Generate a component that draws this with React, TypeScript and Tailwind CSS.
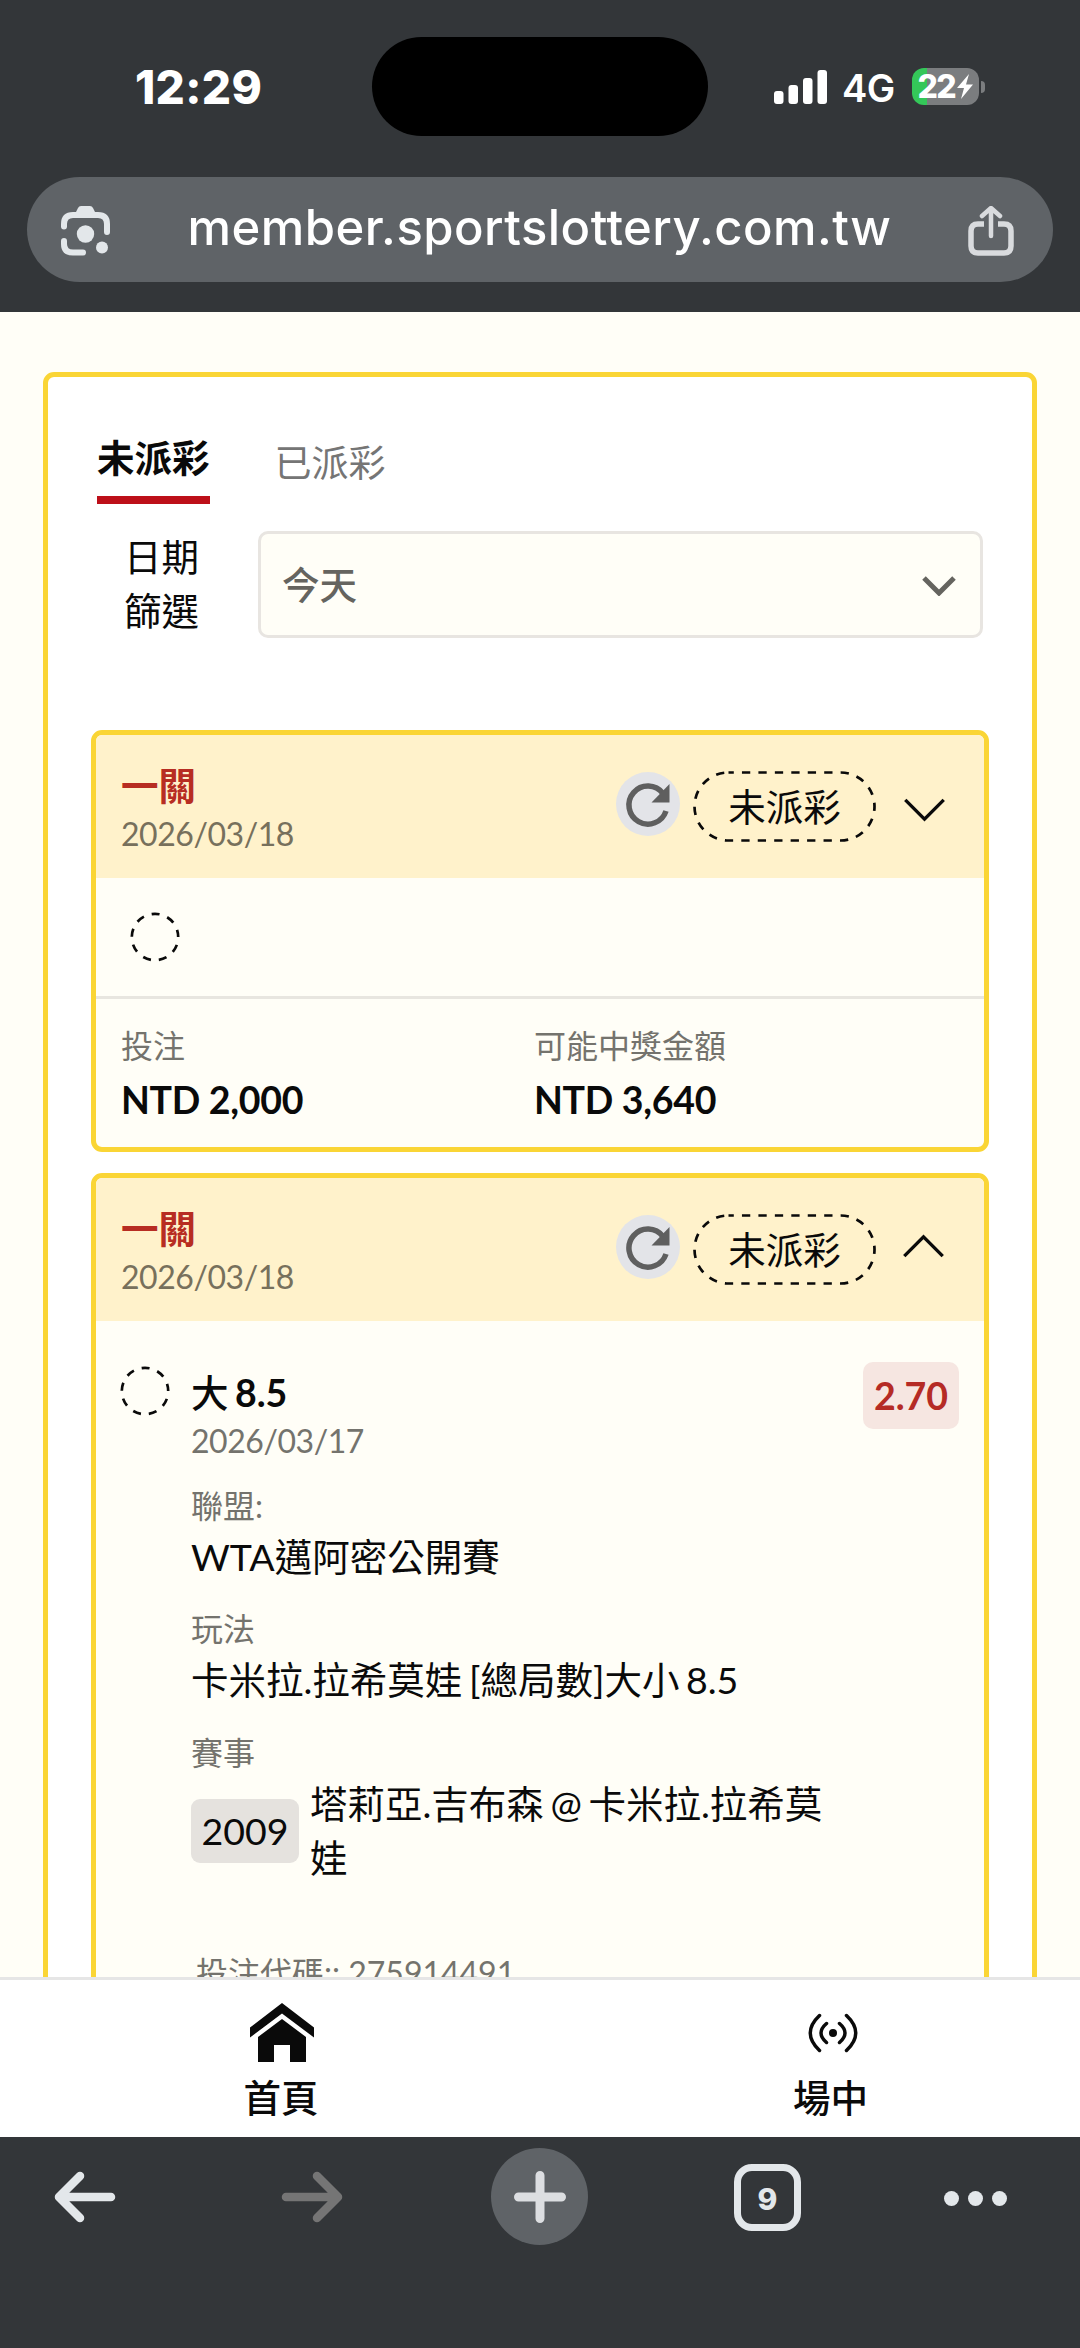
import type { ReactNode } from 'react';
import { clsx } from 'clsx';

interface BetLeg {
  pick: string;
  line: string;
  date: string;
  odds: string;
  league: string;
  play: string;
  matchNo: string;
  match: string;
  code: string;
}

interface Ticket {
  id: number;
  title: string;
  date: string;
  stake: string;
  payout: string;
  leg?: BetLeg;
}

const TICKETS: Ticket[] = [
  { id: 1, title: '一關', date: '2026/03/18', stake: 'NTD 2,000', payout: 'NTD 3,640' },
  {
    id: 2,
    title: '一關',
    date: '2026/03/18',
    stake: '',
    payout: '',
    leg: {
      pick: '大',
      line: '8.5',
      date: '2026/03/17',
      odds: '2.70',
      league: 'WTA邁阿密公開賽',
      play: '卡米拉.拉希莫娃 [總局數]大小 8.5',
      matchNo: '2009',
      match: '塔莉亞.吉布森 @ 卡米拉.拉希莫娃',
      code: '275914491',
    },
  },
];

export default function App() {
  return (
    <div className="flex h-[2348px] w-[1080px] flex-col overflow-hidden bg-[#fffef7] font-['Lato','Noto_Sans_CJK_TC',sans-serif] text-[37.5px] leading-[54px] text-[#0a0a0a]">
      <header className="h-[312px] shrink-0 bg-[#333639] font-['Inter',sans-serif] text-white">
        <StatusBar />
        <AddressBar />
      </header>
      <main className="min-h-0 flex-1 overflow-hidden px-[43px] pt-[60px]">
        <section className="h-[1800px] rounded-[11px] border-[5px] border-[#fad535] bg-white px-[44px]">
          <Tabs />
          <DateFilter />
          <div className="mt-[92px] flex flex-col gap-[21px]">
            {TICKETS.map((ticket) => (
              <TicketCard key={ticket.id} ticket={ticket} />
            ))}
          </div>
        </section>
      </main>
      <BottomNav />
      <Toolbar />
    </div>
  );
}

function StatusBar() {
  return (
    <div className="flex h-[177px] pt-[37px]">
      <div className="flex w-[372px] items-start pl-[135px]">
        <span className="mt-[23px] text-[46px] font-extrabold tracking-[0.3px]">12:29</span>
      </div>
      <div className="h-[99px] w-[336px] rounded-full bg-black" />
      <div className="flex h-[99px] flex-1 items-center pl-[66px]">
        <svg className="h-[34px] w-[54px]" viewBox="0 0 54 34" fill="white">
          <rect x="0" y="21" width="9.5" height="13" rx="3" />
          <rect x="14.5" y="15" width="9.5" height="19" rx="3" />
          <rect x="29" y="8" width="9.5" height="26" rx="3" />
          <rect x="43.5" y="0" width="9.5" height="34" rx="3" />
        </svg>
        <span className="ml-[14px] mt-[3px] text-[38px] font-semibold tracking-[-0.5px]">4G</span>
        <div className="ml-[17px] flex h-[37px] w-[67px] items-center justify-center rounded-[12px] bg-linear-to-r from-[#34c759] from-[22%] to-[#7b7d7f] to-[22%]">
          <span className="text-[32px] font-extrabold tracking-[-1.5px]">22</span>
          <svg className="ml-[2px] h-[25px] w-[16px]" viewBox="0 0 16 25" fill="white">
            <path d="M12 0 0 14h7L4 25l12-14.500H9z" />
          </svg>
        </div>
        <div className="ml-[2px] h-[12px] w-[4px] rounded-r-full bg-[#7b7d7f]" />
      </div>
    </div>
  );
}

function AddressBar() {
  return (
    <div className="mx-[27px] flex h-[105px] items-center rounded-full bg-[#5f6367] pl-[34px] pr-[39px]">
      <svg className="mt-[2px] h-[50px] w-[50px]" viewBox="0 0 50 50" fill="none" stroke="#e3e7ea" strokeWidth="6" strokeLinecap="round">
        <path d="M3 20.500V18q0-9 9-9h25q9 0 9 9v8M3 35v3q0 8.500 9 8.500h10" />
        <path d="M14 8l3-6q1-2 3-2h9q2 0 3 2l3 6v4H14z" fill="#e3e7ea" stroke="none" />
        <circle cx="24.500" cy="28" r="8.700" fill="#e3e7ea" stroke="none" />
        <circle cx="41" cy="41.500" r="6" fill="#e3e7ea" stroke="none" />
      </svg>
      <span className="flex-1 pb-[4px] text-center text-[49px] font-medium tracking-[0.45px]">member.sportslottery.com.tw</span>
      <svg className="mt-[2px] h-[50px] w-[46px]" viewBox="0 0 46 50" fill="none" stroke="#d9dbde" strokeWidth="5.500" strokeLinejoin="round">
        <path d="M16 18h-6q-7 0-7 7v15q0 7 7 7h26q7 0 7-7V25q0-7-7-7h-6" />
        <path d="M23 30V4M14 10l9-8 9 8" strokeWidth="4.500" strokeLinecap="round" />
      </svg>
    </div>
  );
}

function Tabs() {
  return (
    <nav className="flex h-[127px] gap-[65px] pl-[5px] pt-[53px]">
      <button className="h-[74px] border-b-[8px] border-[#bd0f19] pb-[10px] font-bold">未派彩</button>
      <button className="h-[62px] pt-[4px] text-[37px] text-[#757575]">已派彩</button>
    </nav>
  );
}

function DateFilter() {
  return (
    <div className="mt-[27px] flex h-[107px] items-center pr-[5px]">
      <span className="ml-[32px] w-[76px] pb-px">日期 篩選</span>
      <div className="ml-[58px] flex h-full flex-1 items-center justify-between rounded-[10px] border-[3px] border-[#e8e5e1] bg-[#fffef7] pl-[21px] pr-[24px] font-medium text-[#65645f]">
        今天
        <svg className="mt-[2px] h-[20px] w-[34px]" viewBox="0 0 34 20" fill="none" stroke="#65645f" strokeWidth="5">
          <path d="M2 2l15 15L32 2" />
        </svg>
      </div>
    </div>
  );
}

function TicketCard({ ticket }: { ticket: Ticket }) {
  const { title, date, stake, payout, leg } = ticket;
  return (
    <article className="-mx-px overflow-hidden rounded-[11px] border-[5px] border-[#fad535] bg-[#fffef7]">
      <div className="flex h-[143px] items-start bg-[#fff2cb] pl-[25px] pr-[37px] pt-[24px]">
        <div className="flex-1">
          <h2 className="font-bold text-[#b72d22]">{title}</h2>
          <p className="text-[32px] leading-[42px] tracking-[-0.45px] text-[#77705c]">{date}</p>
        </div>
        <RefreshButton />
        <StatusPill />
        <svg
          className={clsx('ml-[27px] mr-px h-[25px] w-[43px]', leg ? 'mt-[31px] -translate-x-px rotate-180' : 'mt-[39px]')}
          viewBox="0 0 44 26"
          fill="none"
          stroke="#0a0a0a"
          strokeWidth="3.5"
        >
          <path d="M2 2l20 20L42 2" />
        </svg>
      </div>
      {leg ? (
        <LegDetail leg={leg} />
      ) : (
        <>
          <div className="h-[121px] border-b-[3px] border-[#e8e6e0] pl-[34px] pt-[34px]">
            <PendingCircle />
          </div>
          <div className="flex h-[148px] pl-[25px] pt-[20px]">
            <Amount label="投注" value={stake} />
            <Amount label="可能中獎金額" value={payout} />
          </div>
        </>
      )}
    </article>
  );
}

function RefreshButton() {
  return (
    <button className="mt-[13px] size-[64px] rounded-full bg-[#e3e4e8]">
      <svg className="size-full" viewBox="0 0 64 64">
        <path d="M47 21.500A19 19 0 1 0 50 39" fill="none" stroke="#5f5f5f" strokeWidth="5.500" />
        <path d="M53.500 12v18.500H35.500z" fill="#5f5f5f" />
      </svg>
    </button>
  );
}

function StatusPill() {
  return (
    <div className="relative ml-[13px] mt-[12px] flex h-[71px] w-[183px] items-center justify-center">
      <svg className="absolute inset-0 size-full" viewBox="0 0 183 71" fill="none">
        <rect x="1.500" y="1.500" width="180" height="68" rx="34" stroke="#0a0a0a" strokeWidth="2.700" strokeDasharray="8.300 8.150" strokeDashoffset="3" />
      </svg>
      未派彩
    </div>
  );
}

function PendingCircle() {
  return (
    <svg className="size-[50px] shrink-0" viewBox="0 0 50 50" fill="none">
      <circle cx="25" cy="25" r="23.200" stroke="#0a0a0a" strokeWidth="2.700" strokeDasharray="8.100 8.097" strokeDashoffset="-8" />
    </svg>
  );
}

function Amount({ label, value }: { label: string; value: string }) {
  return (
    <div className="w-[413px]">
      <p className="text-[32px] text-[#74736d]">{label}</p>
      <p className="font-bold tracking-[-0.3px]">{value}</p>
    </div>
  );
}

function LegDetail({ leg }: { leg: BetLeg }) {
  return (
    <div className="flex h-[900px] items-start pl-[24px] pr-[25px] pt-[41px]">
      <div className="pt-[4px]">
        <PendingCircle />
      </div>
      <div className="ml-[21px] w-[640px] pt-[4px] [word-spacing:-3px]">
        <p className="font-medium">
          {leg.pick} <b>{leg.line}</b>
        </p>
        <p className="-mb-[2px] text-[32px] leading-[42px] tracking-[-0.45px] text-[#74736d]">{leg.date}</p>
        <Field label="聯盟:">{leg.league}</Field>
        <Field label="玩法">{leg.play}</Field>
        <Field label="賽事">
          <span className="flex items-center">
            <span className="mr-[11px] flex h-[64px] w-[108px] items-center justify-center rounded-[9px] bg-[#e5e2de]">{leg.matchNo}</span>
            <span className="flex-1">{leg.match}</span>
          </span>
        </Field>
        <p className="mt-[61px] pl-[5px] text-[32px] text-[#74736d] [word-spacing:0px]">投注代碼:: {leg.code}</p>
      </div>
      <span className="ml-auto flex h-[67px] w-[96px] items-center justify-center rounded-[10px] bg-[#f6e6e1] font-bold text-[#b52b25]">
        {leg.odds}
      </span>
    </div>
  );
}

function Field({ label, children }: { label: string; children: ReactNode }) {
  return (
    <div className="mt-[20.5px]">
      <p className="text-[32px] leading-[49px] text-[#74736d]">{label}</p>
      <div>{children}</div>
    </div>
  );
}

function BottomNav() {
  return (
    <nav className="flex h-[160px] shrink-0 border-t-[3px] border-[#e6e6e6] bg-white font-medium">
      <a className="flex w-[562px] shrink-0 flex-col items-center pt-[23px]">
        <svg className="h-[60px] w-[64px] translate-x-px" viewBox="0 0 64 60" fill="#0a0a0a">
          <path d="M32 0 64 24.500v10L32 10.500 0 34.500v-10z" />
          <path d="M32 16 56 34v25H40V42H24v17H8V34z" />
        </svg>
        <span className="mt-[8px]">首頁</span>
      </a>
      <a className="flex w-[537px] shrink-0 flex-col items-center pt-[23px]">
        <svg className="my-[10px] h-[40px] w-[50px] translate-x-[2px]" viewBox="0 0 50 40" fill="none" stroke="#0a0a0a" strokeWidth="3.5" strokeLinecap="round">
          <circle cx="25" cy="20" r="4" fill="#0a0a0a" stroke="none" />
          <path d="M18.500 10.500q-11 9.500 0 19M31.500 10.500q11 9.500 0 19M11.500 2.500Q-7 20 11.500 37.500M38.500 2.500q18.500 17.500 0 35" />
        </svg>
        <span className="mt-[8px]">場中</span>
      </a>
    </nav>
  );
}

function Toolbar() {
  return (
    <footer className="flex h-[211px] shrink-0 items-start bg-[#333639] pl-[54px] pt-[11px]">
      <Arrow color="#e3e7ea" />
      <Arrow color="#757575" flip />
      <button className="-ml-[17px] flex size-[97px] items-center justify-center rounded-full bg-[#5f6367]">
        <svg className="size-[52px]" viewBox="0 0 52 52" stroke="#dcdee1" strokeWidth="9" strokeLinecap="round">
          <path d="M26 4.500v43M4.500 26h43" />
        </svg>
      </button>
      <button className="ml-[146px] mt-[16px] flex size-[67px] items-center justify-center rounded-[18px] border-[7px] border-[#e3e7ea] pt-[2px] font-['Inter',sans-serif] text-[30px] font-extrabold text-[#e3e7ea]">
        9
      </button>
      <div className="ml-[143px] mt-[43px] flex gap-[9px]">
        <i className="size-[15px] rounded-full bg-[#e3e7ea]" />
        <i className="size-[15px] rounded-full bg-[#e3e7ea]" />
        <i className="size-[15px] rounded-full bg-[#e3e7ea]" />
      </div>
    </footer>
  );
}

function Arrow({ color, flip }: { color: string; flip?: boolean }) {
  return (
    <svg
      className={clsx('mr-[165px] mt-[23px] h-[52px] w-[62px] shrink-0', { 'rotate-180': flip })}
      viewBox="0 0 62 52"
      fill="none"
      stroke={color}
      strokeWidth="8.500"
      strokeLinecap="round"
      strokeLinejoin="round"
    >
      <path d="M57 26H6M26 5 5 26l21 21" />
    </svg>
  );
}
